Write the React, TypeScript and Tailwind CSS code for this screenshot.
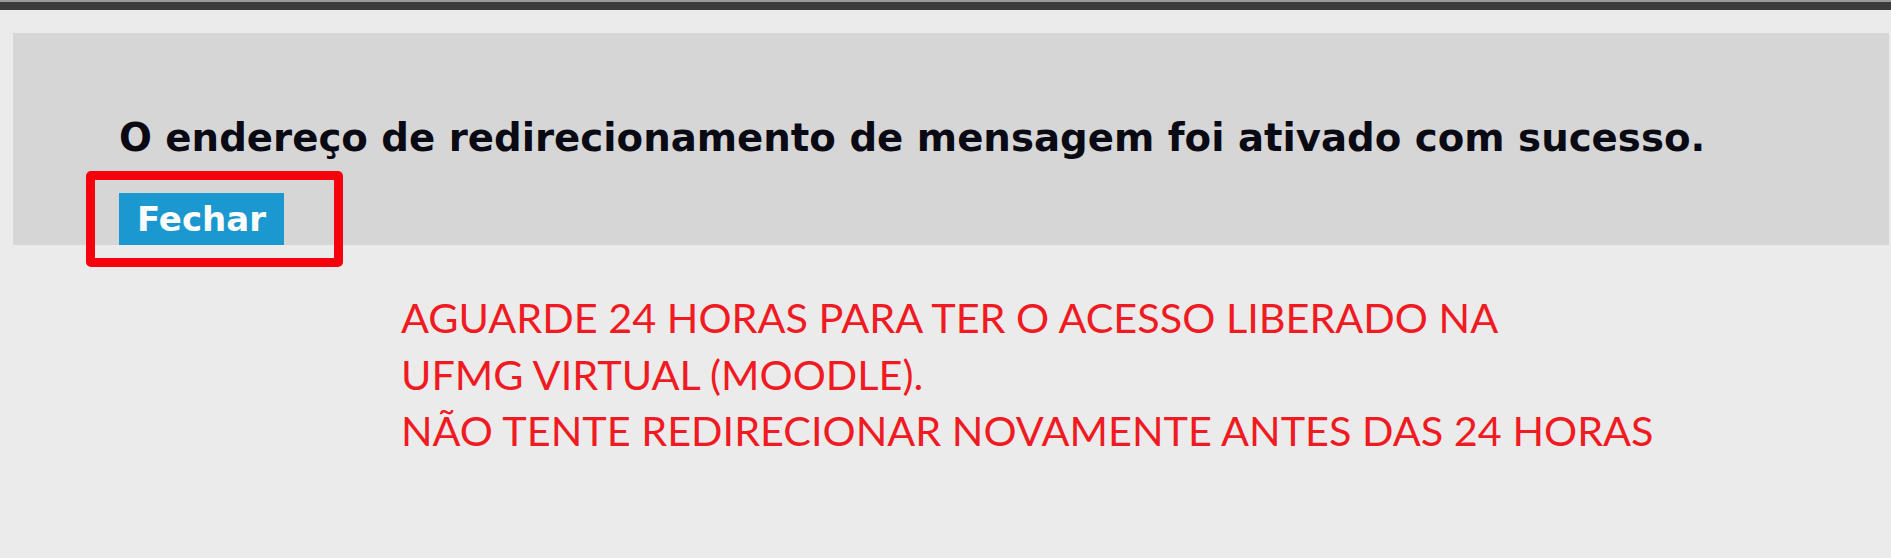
export default function App() {
  return (
    <div className="relative w-[1891px] h-[558px] bg-[#ebebeb] overflow-hidden">
      <div className="h-[2px] bg-[#9a9a9a]" />
      <div className="h-[8px] bg-[#3b3b3b]" />
      <div className="h-[23px]" />
      <div className="ml-[13px] mr-[2px] h-[212px] bg-[#d6d6d6] pt-[86px] pl-[106px]">
        <h1
          className="text-[38.7px] leading-[38px] font-bold text-[#0a0a14] whitespace-nowrap"
          style={{ fontFamily: '"DejaVu Sans", Verdana, sans-serif' }}
        >
          O endereço de redirecionamento de mensagem foi ativado com sucesso.
        </h1>
        <div className="relative mt-[36px] inline-block">
          <button
            className="h-[52px] px-[18px] bg-[#1b98d0] text-white text-[34px] font-bold leading-[52px]"
            style={{ fontFamily: '"DejaVu Sans", Verdana, sans-serif' }}
          >
            Fechar
          </button>
          <div className="absolute left-[-33px] top-[-22px] right-[-59px] bottom-[-22px] border-[9px] border-[#f5000c] rounded-[5px]" />
        </div>
      </div>
      <div
        className="pl-[401px] pt-[44px] text-[#f01a22] text-[41.4px] leading-[56.5px]"
        style={{ fontFamily: 'Lato, "Open Sans", sans-serif' }}
      >
        <p>AGUARDE 24 HORAS PARA TER O ACESSO LIBERADO NA</p>
        <p>UFMG VIRTUAL (MOODLE).</p>
        <p>NÃO TENTE REDIRECIONAR NOVAMENTE ANTES DAS 24 HORAS</p>
      </div>
    </div>
  );
}
